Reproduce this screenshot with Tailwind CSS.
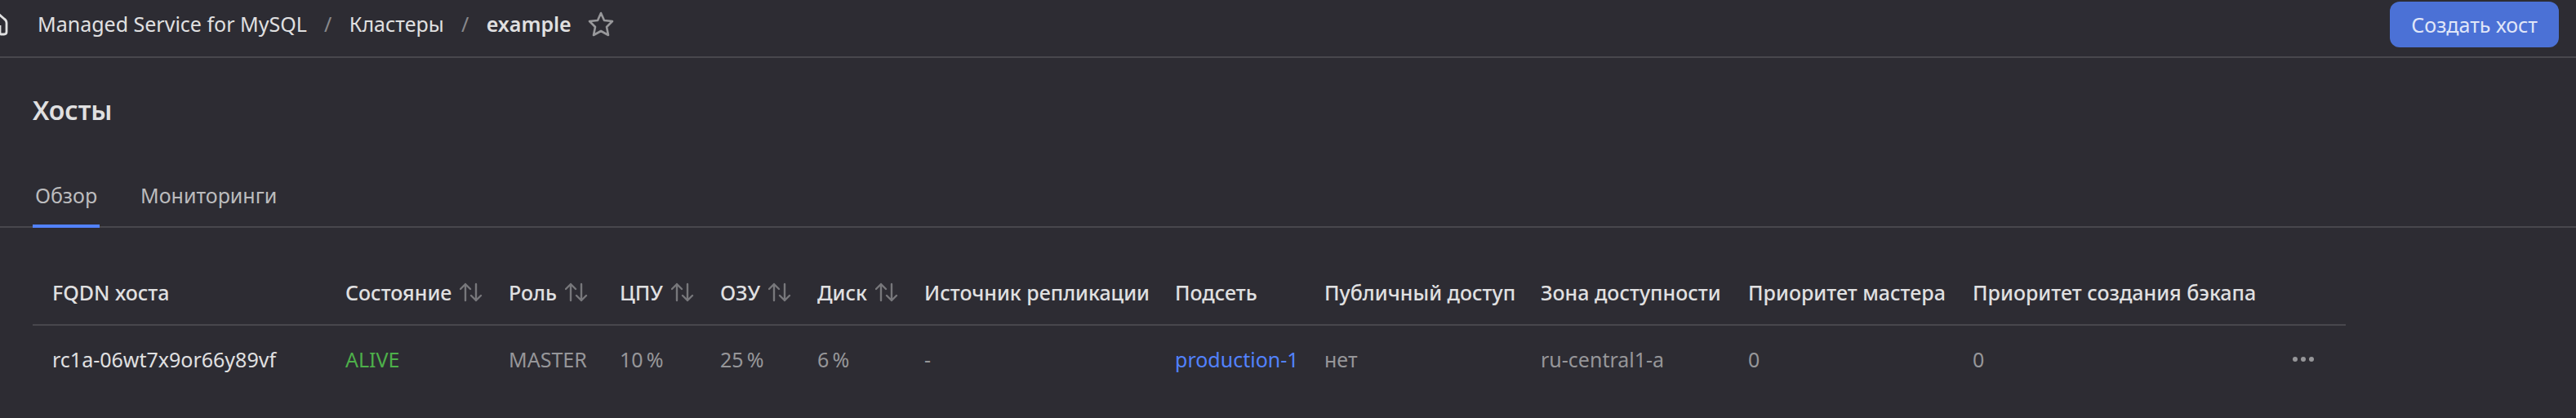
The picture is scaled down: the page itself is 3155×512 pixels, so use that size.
<!DOCTYPE html>
<html lang="ru">
<head>
<meta charset="utf-8">
<title>Хосты</title>
<script src="https://cdn.jsdelivr.net/npm/@tailwindcss/browser@4"></script>
</head>
<body class="min-h-screen bg-[#2d2c33] font-['Noto_Sans',sans-serif] text-[25px] leading-9 text-[#e0e0e1]">
<svg class="hidden">
  <symbol id="sort" viewBox="0 0 28 24"><path d="M7 22V2M1 8l6-6 6 6M20 2v20M14 16l6 6 6-6" fill="none" stroke="currentColor" stroke-width="2.4" stroke-linecap="round" stroke-linejoin="round"/></symbol>
</svg>
<header class="flex h-[71px] items-start justify-between border-b-2 border-[#48474d] pr-[21px]">
  <nav class="flex h-[58px] items-center" aria-label="Навигация">
    <a href="#" aria-label="Главная" class="w-[46px]"><svg class="h-8 w-[10px]" viewBox="0 0 10 32" fill="none" stroke="currentColor" stroke-width="2.8"><path d="M-3 3L5 10Q8 12 8 15V26Q8 29 5 29H2Q0 29 0 27V18"/></svg></a>
    <a href="#">Managed Service for MySQL</a>
    <span class="w-[52px] text-center text-[#88888c]">/</span>
    <a href="#">Кластеры</a>
    <span class="w-[52px] text-center text-[#88888c]">/</span>
    <a href="#" class="font-semibold">example</a>
    <button class="ml-5" aria-label="В избранное"><svg class="h-8 w-8" viewBox="0 0 32 32" fill="none" stroke="#98989b" stroke-width="2.6" stroke-linejoin="round"><path d="M16 3l4 9 10 1-7 7 2 10-9-5-9 5 2-10-7-7 10-1z"/></svg></button>
  </nav>
  <button class="mt-[2px] h-14 rounded-xl bg-[#4b71d6] px-[26px] text-[#e0e6f8]">Создать хост</button>
</header>
<main>
  <h1 class="px-10 pt-11 text-[32px] leading-10 font-semibold">Хосты</h1>
  <div role="tablist" class="mt-[54px] flex h-[70px] items-end gap-[50px] border-b-2 border-[#48474d] px-10 text-[#bcbcbe]">
    <button role="tab" aria-selected="true" class="-mb-[2px] min-w-[82px] border-b-4 border-[#5282ff] pb-[18px]">Обзор</button>
    <button role="tab" aria-selected="false" class="pb-5">Мониторинги</button>
  </div>
  <table class="mt-10 ml-10 table-fixed border-collapse text-left whitespace-nowrap">
    <colgroup><col class="w-[383px]"><col class="w-[200px]"><col class="w-[136px]"><col class="w-[123px]"><col class="w-[119px]"><col class="w-[131px]"><col class="w-[307px]"><col class="w-[183px]"><col class="w-[265px]"><col class="w-[254px]"><col class="w-[275px]"><col class="w-[391px]"><col class="w-[66px]"></colgroup>
    <thead>
      <tr class="h-[79px] border-b-2 border-[#48474d] [&>th]:p-0 [&>th]:font-medium">
        <th class="pl-6!">FQDN хоста</th>
        <th><button class="flex items-center gap-[10px]">Состояние<svg class="h-6 w-7 text-[#77777b]"><use href="#sort"/></svg></button></th>
        <th><button class="flex items-center gap-[10px]">Роль<svg class="h-6 w-7 text-[#77777b]"><use href="#sort"/></svg></button></th>
        <th><button class="flex items-center gap-[10px]">ЦПУ<svg class="h-6 w-7 text-[#77777b]"><use href="#sort"/></svg></button></th>
        <th><button class="flex items-center gap-[10px]">ОЗУ<svg class="h-6 w-7 text-[#77777b]"><use href="#sort"/></svg></button></th>
        <th><button class="flex items-center gap-[10px]">Диск<svg class="h-6 w-7 text-[#77777b]"><use href="#sort"/></svg></button></th>
        <th>Источник репликации</th><th>Подсеть</th><th>Публичный доступ</th><th>Зона доступности</th><th>Приоритет мастера</th><th>Приоритет создания бэкапа</th><th></th>
      </tr>
    </thead>
    <tbody>
      <tr class="h-[82px] text-[#969699] [&>td]:p-0">
        <td class="pl-6! text-[#e0e0e1]">rc1a-06wt7x9or66y89vf</td><td class="text-[#4db04a]">ALIVE</td><td>MASTER</td><td>10&#8201;%</td><td>25&#8201;%</td><td>6&#8201;%</td><td>-</td><td><a href="#" class="text-[#5282ff]">production-1</a></td><td>нет</td><td>ru-central1-a</td><td>0</td><td>0</td>
        <td><button class="block" aria-label="Действия"><svg class="h-8 w-7" viewBox="0 0 28 32" fill="currentColor"><circle cx="4" cy="16" r="3"/><circle cx="14" cy="16" r="3"/><circle cx="24" cy="16" r="3"/></svg></button></td>
      </tr>
    </tbody>
  </table>
</main>
</body>
</html>
